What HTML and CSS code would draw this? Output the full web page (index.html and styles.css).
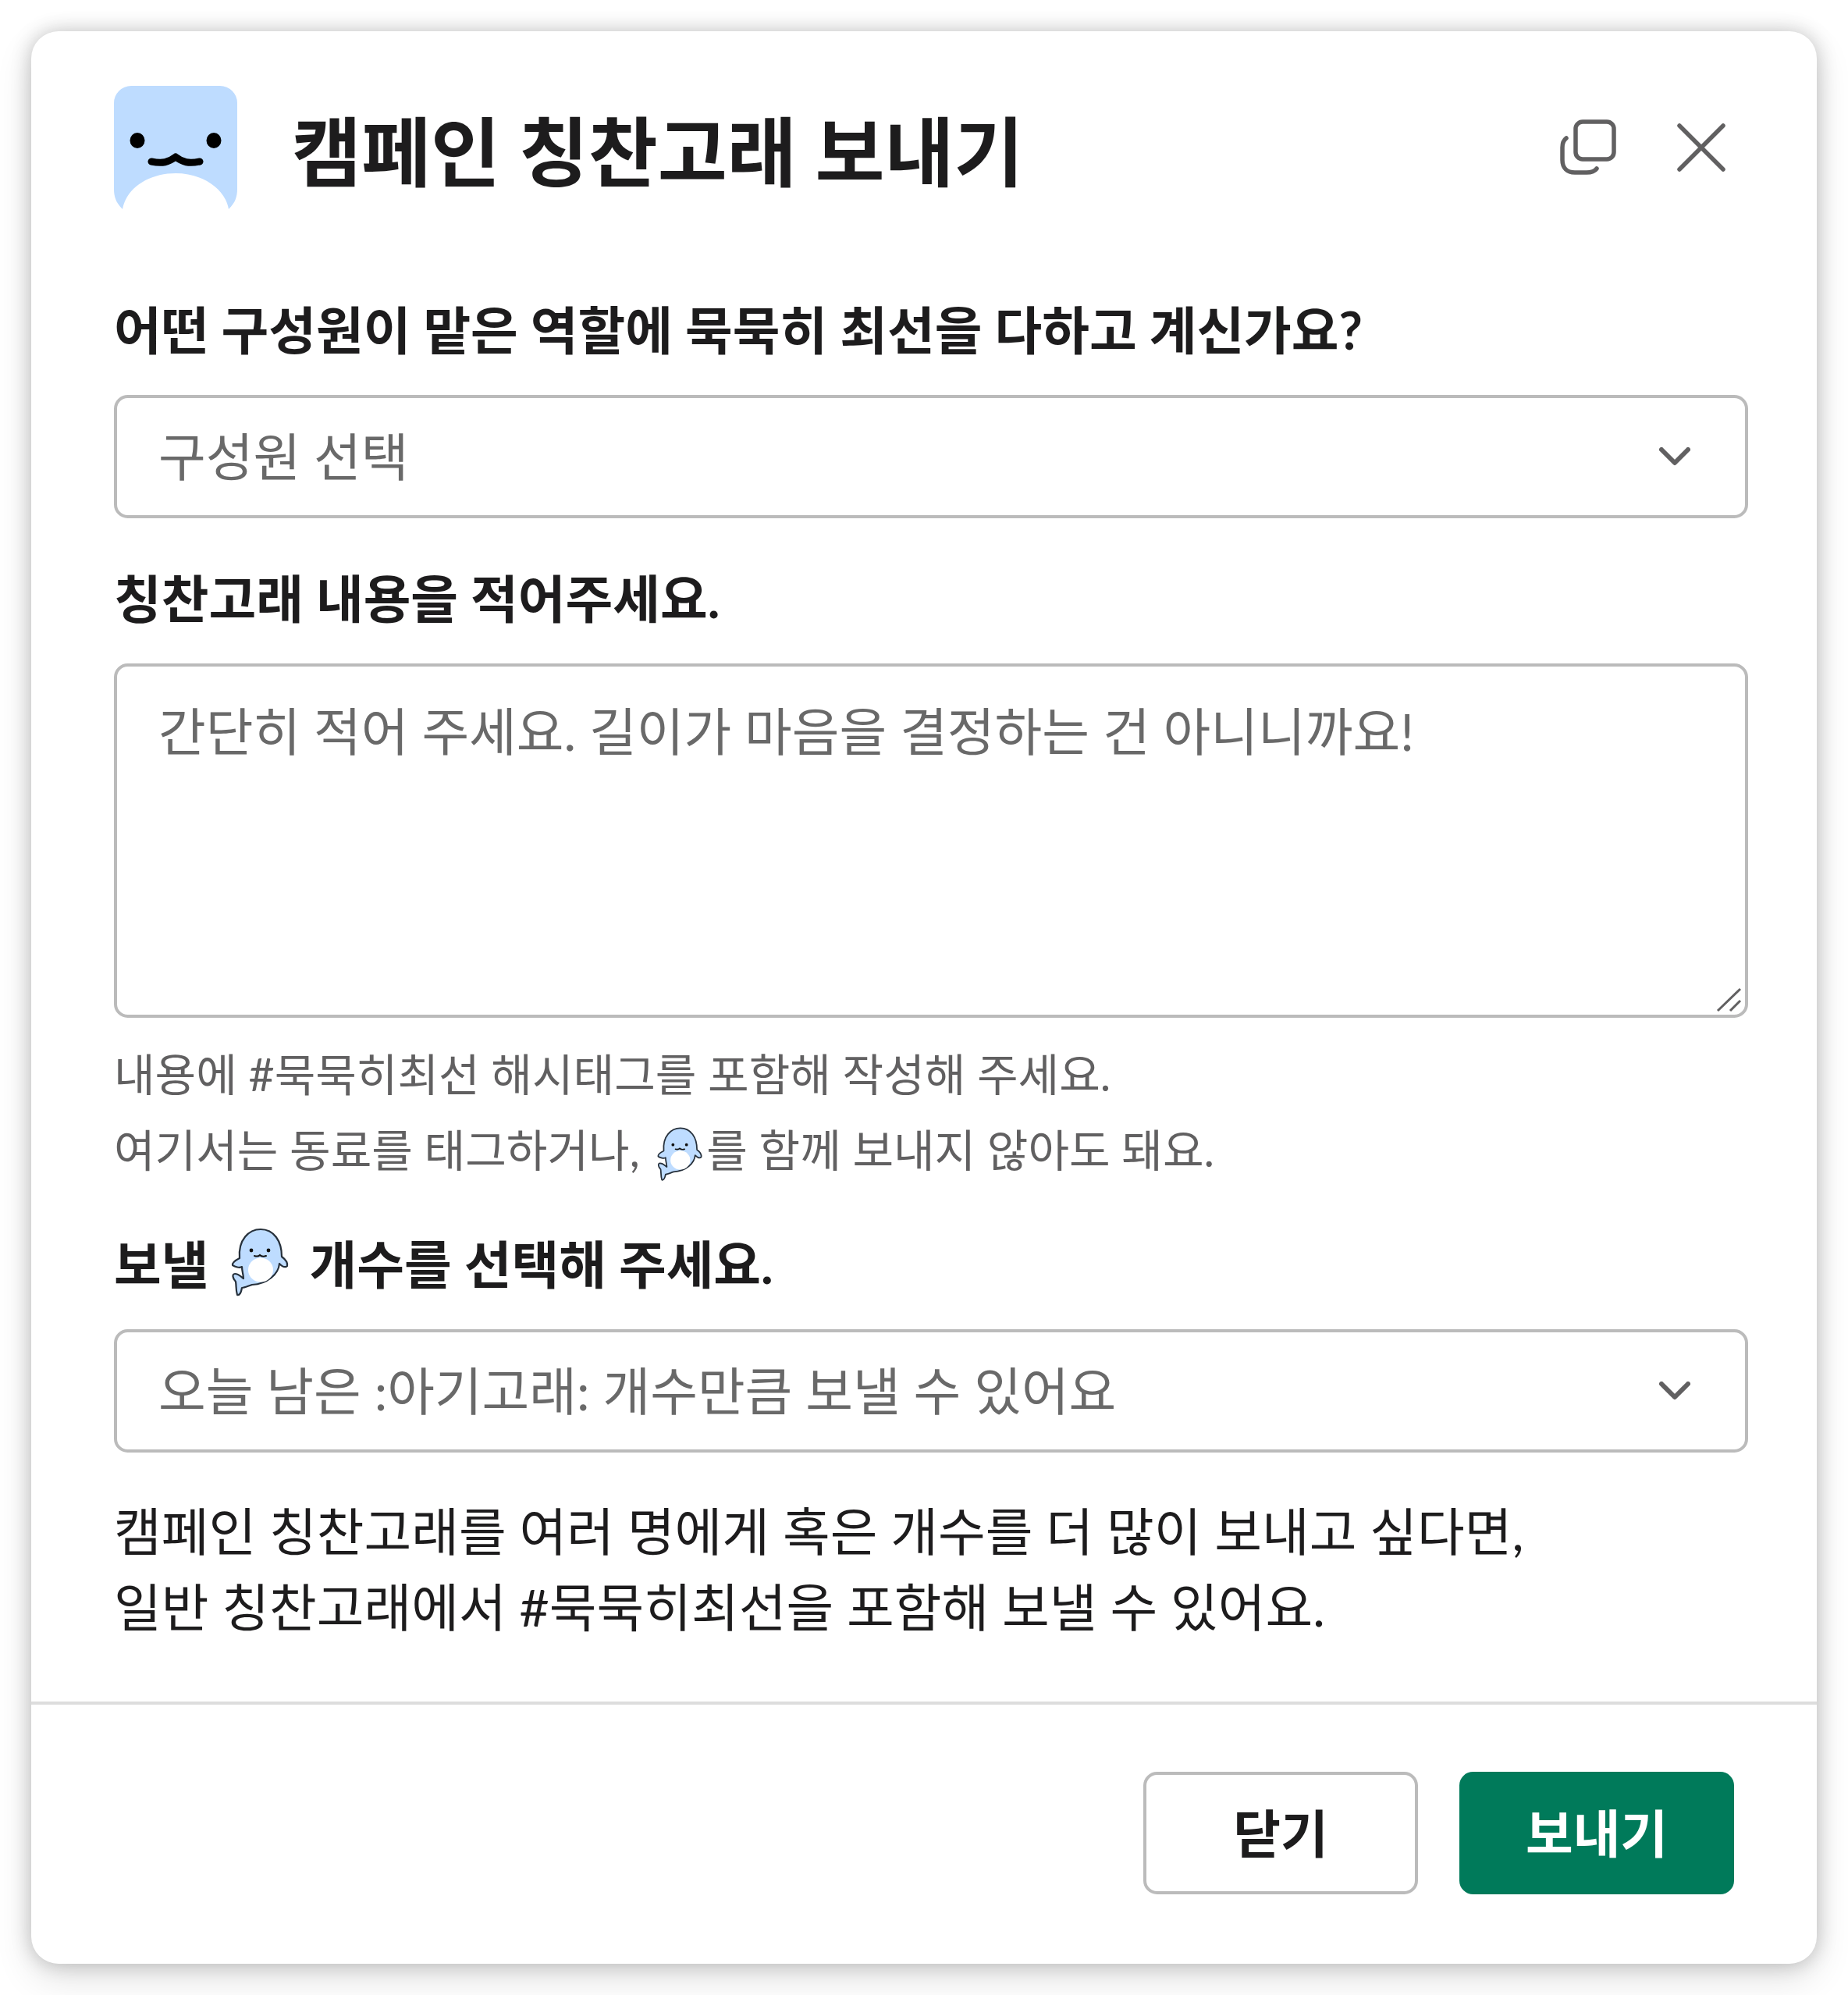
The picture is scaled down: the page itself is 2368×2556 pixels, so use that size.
FILE: index.html
```html
<!DOCTYPE html>
<html lang="ko">
<head>
<meta charset="utf-8">
<title>캠페인 칭찬고래 보내기</title>
<link rel="stylesheet" href="styles.css">
</head>
<body>
<svg class="defs" width="0" height="0" aria-hidden="true">
  <symbol id="whale" viewBox="14 12 76 90">
    <path d="M26 52C24 28 38 15 53 15C70 15 80 30 80 50C84 53 88 57 87 62C84 65 80 62 77 59C76 72 62 85 42 86C36 88 32 90 29 90C28 96 26 100 23 99C21 92 22 88 21 82C17 78 16 72 20 72C25 72 28 76 31 78C31 74 29 68 29 63C26 65 20 63 17 61C16 57 22 54 26 52Z" fill="#bedcff" stroke="#26303b" stroke-width="2.2" stroke-linejoin="round"/>
    <ellipse cx="53" cy="67" rx="16" ry="15.5" fill="#fff"/>
    <circle cx="41" cy="42" r="2.4" fill="#111"/><circle cx="63" cy="42" r="2.4" fill="#111"/>
    <path d="M45 49C48 50 50 50 52 48C54 50 57 50 60 49" fill="none" stroke="#111" stroke-width="2" stroke-linecap="round"/>
  </symbol>
</svg>
<section class="modal">
  <header class="head">
    <svg class="logo" viewBox="0 0 158 158">
      <path d="M0 22A22 22 0 0 1 22 0H136A22 22 0 0 1 158 22V132C158 143 155 150 147 158C142 130 112 112 79 112C46 112 16 130 11 158C3 150 0 143 0 132Z" fill="#bedcff"/>
      <ellipse cx="30" cy="70" rx="9.5" ry="10" fill="#000"/><ellipse cx="128" cy="70" rx="9.5" ry="10" fill="#000"/>
      <path d="M48 97C62 100 70 98 79 91C88 98 96 100 110 97" fill="none" stroke="#000" stroke-width="9" stroke-linecap="round" stroke-linejoin="round"/>
    </svg>
    <h1 class="title">캠페인 칭찬고래 보내기</h1>
    <div class="tools">
      <svg class="copy" viewBox="0 0 72 72" fill="none" stroke="#616061" stroke-width="5.5" stroke-linecap="round">
        <rect x="20" y="3" width="49" height="48" rx="9"/>
        <path d="M8 24C4 27 3 30 3 36V52C3 62 9 68 19 68H34C40 68 44 67 47 63"/>
      </svg>
      <svg class="close" viewBox="0 0 62 62" fill="none" stroke="#616061" stroke-width="5.5" stroke-linecap="round">
        <path d="M3 3L59 59M59 3L3 59"/>
      </svg>
    </div>
  </header>

  <div class="body">
    <label class="label">어떤 구성원이 맡은 역할에 묵묵히 최선을 다하고 계신가요?</label>
    <div class="field select">
      <span class="placeholder">구성원 선택</span>
      <svg class="chev" viewBox="0 0 40 24" fill="none" stroke="#616061" stroke-width="6" stroke-linecap="round" stroke-linejoin="round"><path d="M3 3L20 20L37 3"/></svg>
    </div>

    <label class="label label-next">칭찬고래 내용을 적어주세요.</label>
    <div class="field area">
      <span class="placeholder">간단히 적어 주세요. 길이가 마음을 결정하는 건 아니니까요!</span>
      <svg class="grip" viewBox="0 0 34 32" fill="none" stroke="#616061" stroke-width="3"><path d="M2 30L31 2M18 30L31 17"/></svg>
    </div>
    <p class="hint">내용에 #묵묵히최선 해시태그를 포함해 작성해 주세요.<br>여기서는 동료를 태그하거나, <svg class="whale-sm"><use href="#whale"/></svg>를 함께 보내지 않아도 돼요.</p>

    <label class="label label-count">보낼 <svg class="whale-lg"><use href="#whale"/></svg> 개수를 선택해 주세요.</label>
    <div class="field select">
      <span class="placeholder">오늘 남은 :아기고래: 개수만큼 보낼 수 있어요</span>
      <svg class="chev" viewBox="0 0 40 24" fill="none" stroke="#616061" stroke-width="6" stroke-linecap="round" stroke-linejoin="round"><path d="M3 3L20 20L37 3"/></svg>
    </div>
    <p class="note">캠페인 칭찬고래를 여러 명에게 혹은 개수를 더 많이 보내고 싶다면,<br>일반 칭찬고래에서 #묵묵히최선을 포함해 보낼 수 있어요.</p>
  </div>

  <footer class="foot">
    <button class="btn btn-plain" type="button">닫기</button>
    <button class="btn btn-send" type="button">보내기</button>
  </footer>
</section>
</body>
</html>
```
FILE: styles.css
```css
* { box-sizing: border-box; }
html, body { margin: 0; background: #fff; }
body {
  padding: 40px;
  font-family: Lato, "Noto Sans CJK KR", sans-serif;
  color: #1d1c1d;
}
.defs { position: absolute; }
.modal {
  width: 2288px;
  height: 2476px;
  background: #fff;
  border-radius: 35px;
  box-shadow: 0 0 26px rgba(0, 0, 0, .22), 0 18px 48px rgba(0, 0, 0, .12);
  display: flex;
  flex-direction: column;
}
.head {
  display: flex;
  align-items: center;
  padding: 70px 117px 0 106px;
  height: 228px;
}
.logo { width: 158px; height: 158px; flex: none; margin-right: 70px; }
.title { margin: 0; padding-top: 10px; font-size: 96.8px; line-height: 158px; font-weight: 700; flex: 1; }
.tools { display: flex; align-items: center; gap: 78px; }
.copy { width: 72px; height: 72px; }
.close { width: 62px; height: 62px; }
.body { padding: 0 88px 0 106px; display: flex; flex-direction: column; }
.label { display: block; font-size: 66px; font-weight: 700; line-height: 97px; }
.body > .label:first-child { margin-top: 106px; }
.label-next { margin-top: 54px; }
.label-count { margin-top: 49px; display: flex; align-items: center; white-space: pre; }
.field {
  margin-top: 35px;
  border: 4.4px solid #bbb;
  border-radius: 17.6px;
  position: relative;
  font-size: 66px;
  color: #696969;
}
.select {
  height: 158px;
  display: flex;
  align-items: center;
  justify-content: space-between;
  padding: 0 70px 0 53px;
}
.area { height: 454px; padding: 40px 53px 0; line-height: 86px; }
.placeholder { line-height: 86px; }
.chev { width: 40px; height: 24px; }
.grip { position: absolute; right: 3px; bottom: 3px; width: 34px; height: 32px; }
.hint { margin: 24px 0 0; font-size: 57.2px; line-height: 97px; color: #616061; }
.note { margin: 53px 0 0; font-size: 66px; line-height: 96.8px; }
.whale-sm { width: 60px; height: 71px; vertical-align: -19px; margin: 0 4px 0 7px; }
.whale-lg { width: 76px; height: 90px; margin: -3px 9px 3px 12px; }
.foot {
  margin-top: auto;
  border-top: 4px solid #ddd;
  display: flex;
  justify-content: flex-end;
  gap: 53px;
  padding: 86px 106px 89px 0;
}
.btn {
  width: 352px;
  height: 157px;
  border-radius: 17.6px;
  font: 700 66px/1 Lato, "Noto Sans CJK KR", sans-serif;
  padding: 0;
}
.btn-plain { background: #fff; border: 4.4px solid #bbb; color: #1d1c1d; }
.btn-send { background: #007a5a; border: 0; color: #fff; }
```
